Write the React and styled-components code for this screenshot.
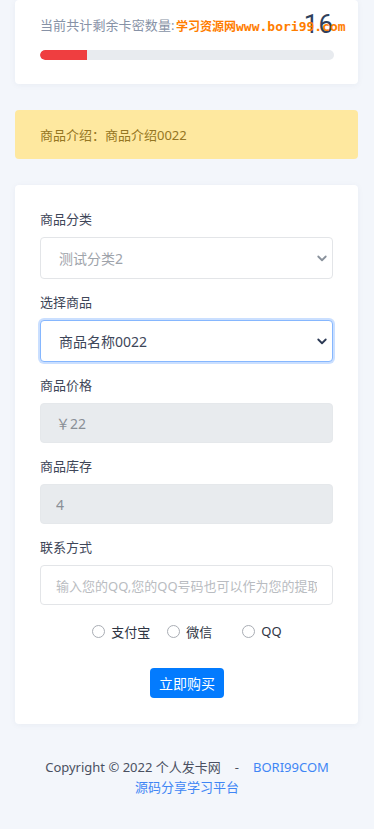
import React from "react";
import styled, { createGlobalStyle } from "styled-components";

const Global = createGlobalStyle`
  html, body { margin: 0; padding: 0; background: #f3f6fb; }
  body { font-family: "Noto Sans", "Noto Sans CJK SC", sans-serif; color: #3c4556; }
  * { box-sizing: border-box; }
`;

const Page = styled.div`
  display: flex;
  flex-direction: column;
  gap: 26px;
  padding: 0 16px 0 15px;
`;

const Card = styled.div`
  position: relative;
  background: #fff;
  border-radius: 4px;
  box-shadow: 0 1px 6px rgba(30, 50, 90, 0.05);
  padding: ${(p) => p.$pad || "25px"};
`;

const StatRow = styled.div`
  display: flex;
  align-items: center;
  justify-content: space-between;
  height: 28px;
`;

const StatLabel = styled.span`
  font-size: 13px;
  color: #8792a6;
  letter-spacing: 0.1px;
`;

const StatNum = styled.span`
  font-family: "Roboto", sans-serif;
  font-size: 26px;
  color: #2f3f5d;
  line-height: 1;
  margin-right: 1px;
`;

const Watermark = styled.div`
  position: absolute;
  left: 161px;
  top: 17px;
  display: flex;
  align-items: baseline;
  color: #ff7d00;
  font-weight: 700;
  white-space: nowrap;
`;

const WmCn = styled.span`
  font-size: 12px;
  font-family: "Noto Sans CJK SC", sans-serif;
`;

const WmEn = styled.span`
  font-size: 13px;
  font-family: "DejaVu Sans Mono", monospace;
`;

const Bar = styled.div`
  margin-top: 12px;
  height: 10px;
  border-radius: 5px;
  background: #e8ebef;
  overflow: hidden;
`;

const BarFill = styled.div`
  height: 100%;
  background: #ef3e40;
  border-radius: 5px 0 0 5px;
`;

const Alert = styled.div`
  background: #fee89f;
  border-radius: 4px;
  height: 49px;
  display: flex;
  align-items: center;
  padding: 0 25px;
  font-size: 13px;
  color: #957622;
`;

const Field = styled.div`
  display: flex;
  flex-direction: column;
  gap: 9px;
  & + & { margin-top: 14px; }
`;

const Label = styled.label`
  font-size: 13px;
  line-height: 18px;
  color: #3e4658;
`;

const SelectWrap = styled.div`
  position: relative;
`;

const Select = styled.select`
  appearance: none;
  width: 100%;
  height: 42px;
  border-radius: 4px;
  padding: 0 18px;
  font-family: "Noto Sans", "Noto Sans CJK SC", sans-serif;
  font-size: 14px;
  background: #fff;
  outline: none;
  color: ${(p) => (p.$focus ? "#3d4659" : "#9ea3aa")};
  border: 1px solid ${(p) => (p.$focus ? "#86b7fe" : "#e3e5e8")};
  box-shadow: ${(p) => (p.$focus ? "0 0 0 2px rgba(13,110,253,0.22)" : "none")};
`;

const Chevron = styled.svg`
  position: absolute;
  right: 5px;
  top: 15px;
  width: 12px;
  height: 12px;
  pointer-events: none;
  color: ${(p) => (p.$focus ? "#2c3a55" : "#8a929c")};
`;

const Input = styled.input`
  width: 100%;
  height: 40px;
  border-radius: 4px;
  padding: 0 15px;
  font-family: "Noto Sans", "Noto Sans CJK SC", sans-serif;
  font-size: 14px;
  outline: none;
  border: 1px solid ${(p) => (p.disabled ? "#e5e8eb" : "#e3e5e8")};
  background: ${(p) => (p.disabled ? "#e8ebee" : "#fff")};
  color: #8a8f96;
  &:disabled { color: #8a8f96; -webkit-text-fill-color: #8a8f96; opacity: 1; }
  &::placeholder { color: #b9bcc1; font-size: 13px; }
`;

const Radios = styled.div`
  display: flex;
  justify-content: center;
  margin-top: 17px;
  margin-left: 1px;
`;

const RadioItem = styled.label`
  display: flex;
  align-items: center;
  gap: 6px;
  width: ${(p) => p.$w || "auto"};
  font-size: 13px;
  color: #2e3442;
  height: 18px;
`;

const RadioDot = styled.span`
  width: 13px;
  height: 13px;
  border-radius: 50%;
  border: 1px solid #a9adb4;
  background: #fff;
  flex: none;
`;

const BtnRow = styled.div`
  display: flex;
  justify-content: center;
  margin-top: 28px;
`;

const Button = styled.button`
  height: 30px;
  padding: 0 9px;
  border: none;
  border-radius: 4px;
  background: #037bfe;
  color: #fff;
  font-family: "Noto Sans CJK SC", sans-serif;
  font-size: 14px;
  margin-left: 1px;
`;

const Footer = styled.footer`
  text-align: center;
  padding: 33px 20px 40px;
  font-size: 13px;
  line-height: 20px;
  color: #4a5061;
`;

const Link = styled.a`
  color: #3f86f5;
  text-decoration: none;
`;

const Dash = styled.span`
  margin: 0 14px;
`;

const Chev = ({ focus }) => (
  <Chevron $focus={focus} viewBox="0 0 16 16" fill="none">
    <path d="M3 6l5 5 5-5" stroke="currentColor" strokeWidth="2.4" strokeLinecap="round" strokeLinejoin="round" />
  </Chevron>
);

export default function App() {
  return (
    <>
      <Global />
      <Page>
        <Card $pad="10px 24px 24px 25px">
          <StatRow>
            <StatLabel>当前共计剩余卡密数量:</StatLabel>
            <StatNum>16</StatNum>
          </StatRow>
          <Bar>
            <BarFill style={{ width: "16%" }} />
          </Bar>
          <Watermark>
            <WmCn>学习资源网</WmCn>
            <WmEn>www.bori99.com</WmEn>
          </Watermark>
        </Card>

        <Alert>商品介绍：商品介绍0022</Alert>

        <Card $pad="25px 25px 26px 25px">
          <Field>
            <Label>商品分类</Label>
            <SelectWrap>
              <Select defaultValue="2">
                <option value="2">测试分类2</option>
              </Select>
              <Chev />
            </SelectWrap>
          </Field>
          <Field>
            <Label>选择商品</Label>
            <SelectWrap>
              <Select $focus defaultValue="22">
                <option value="22">商品名称0022</option>
              </Select>
              <Chev focus />
            </SelectWrap>
          </Field>
          <Field>
            <Label>商品价格</Label>
            <Input disabled value="￥22" readOnly />
          </Field>
          <Field>
            <Label>商品库存</Label>
            <Input disabled value="4" readOnly />
          </Field>
          <Field>
            <Label>联系方式</Label>
            <Input placeholder="输入您的QQ,您的QQ号码也可以作为您的提取卡密的凭证" />
          </Field>
          <Radios>
            <RadioItem $w="75px"><RadioDot />支付宝</RadioItem>
            <RadioItem $w="75px"><RadioDot />微信</RadioItem>
            <RadioItem><RadioDot />QQ</RadioItem>
          </Radios>
          <BtnRow>
            <Button>立即购买</Button>
          </BtnRow>
        </Card>
      </Page>
      <Footer>
        Copyright © 2022 个人发卡网<Dash>-</Dash><Link>BORI99COM</Link>
        <br />
        <Link>源码分享学习平台</Link>
      </Footer>
    </>
  );
}
